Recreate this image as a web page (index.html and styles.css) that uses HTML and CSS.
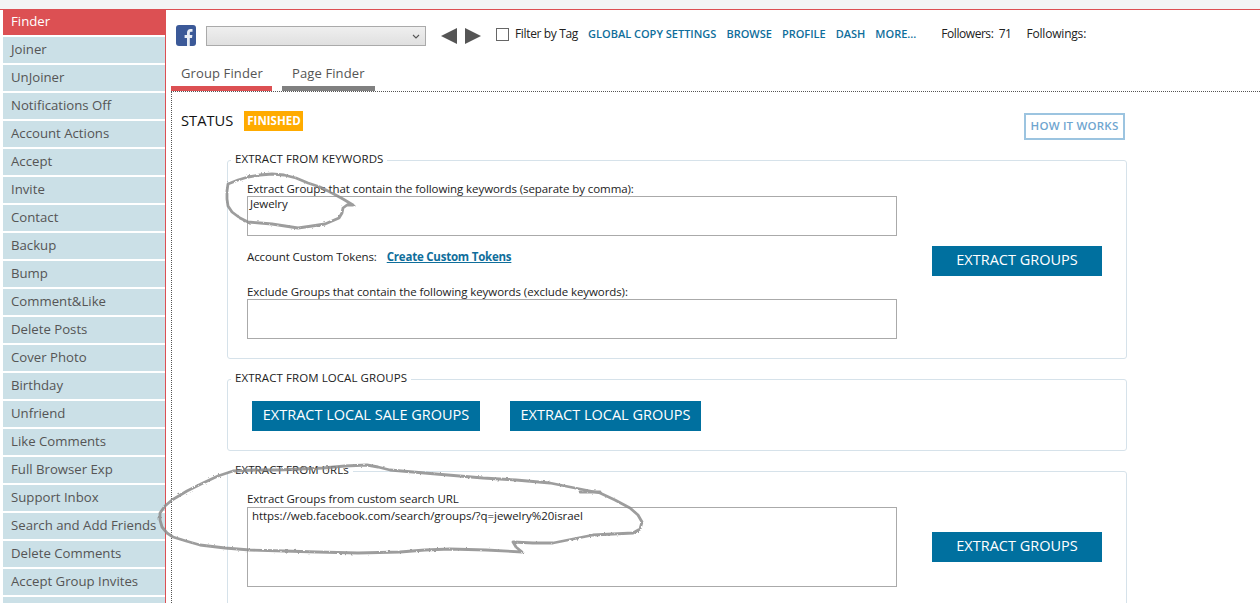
FILE: index.html
```html
<!DOCTYPE html>
<html lang="en">
<head>
<meta charset="utf-8">
<title>Finder</title>
<link rel="stylesheet" href="styles.css">
</head>
<body>
<div class="topstrip"></div>
<div class="app">
  <nav class="sidebar">
    <a class="nav active">Finder</a>
    <a class="nav">Joiner</a>
    <a class="nav">UnJoiner</a>
    <a class="nav">Notifications Off</a>
    <a class="nav">Account Actions</a>
    <a class="nav">Accept</a>
    <a class="nav">Invite</a>
    <a class="nav">Contact</a>
    <a class="nav">Backup</a>
    <a class="nav">Bump</a>
    <a class="nav">Comment&amp;Like</a>
    <a class="nav">Delete Posts</a>
    <a class="nav">Cover Photo</a>
    <a class="nav">Birthday</a>
    <a class="nav">Unfriend</a>
    <a class="nav">Like Comments</a>
    <a class="nav">Full Browser Exp</a>
    <a class="nav">Support Inbox</a>
    <a class="nav">Search and Add Friends</a>
    <a class="nav">Delete Comments</a>
    <a class="nav">Accept Group Invites</a>
    <a class="nav"></a>
  </nav>
  <main class="main">
    <div class="toolbar">
      <svg class="fb" width="20" height="21" viewBox="0 0 20 21"><rect width="20" height="21" rx="3" fill="#3b5998"/><path d="M11 21v-8H8.6V10H11V7.8C11 5.4 12.4 4 14.6 4c.9 0 1.6.1 1.9.1v2.6h-1.3c-1.1 0-1.4.6-1.4 1.3V10h2.6l-.4 3h-2.2v8z" fill="#e9eef6"/></svg>
      <div class="select"><svg width="8" height="5" viewBox="0 0 8 5"><path d="M1 1l3 3 3-3" fill="none" stroke="#555" stroke-width="1.1"/></svg></div>
      <svg class="arrows" width="40" height="18" viewBox="0 0 40 18"><path d="M0 9L16 1v16z" fill="#555"/><path d="M24 1l16 8-16 8z" fill="#555"/></svg>
      <span class="check"></span>
      <span class="filter">Filter by Tag</span>
      <a class="tl first">GLOBAL COPY SETTINGS</a>
      <a class="tl">BROWSE</a>
      <a class="tl">PROFILE</a>
      <a class="tl">DASH</a>
      <a class="tl">MORE...</a>
      <span class="stat followers">Followers:&nbsp; 71</span>
      <span class="stat followings">Followings:</span>
    </div>
    <div class="tabs">
      <a class="tab tab-on">Group Finder</a>
      <a class="tab tab-off">Page Finder</a>
    </div>
    <div class="content">
      <div class="statusrow">
        <span class="status">STATUS</span>
        <span class="badge">FINISHED</span>
        <a class="how">HOW IT WORKS</a>
      </div>
      <fieldset class="panel p1">
        <legend>EXTRACT FROM KEYWORDS</legend>
        <div class="cols">
          <div class="fields">
            <label class="lbl">Extract Groups that contain the following keywords (separate by comma):</label>
            <div class="ta h40">Jewelry</div>
            <div class="tokens"><span>Account Custom Tokens:</span><a class="create">Create Custom Tokens</a></div>
            <label class="lbl">Exclude Groups that contain the following keywords (exclude keywords):</label>
            <div class="ta h40"></div>
          </div>
          <a class="btn side">EXTRACT GROUPS</a>
        </div>
      </fieldset>
      <fieldset class="panel p2">
        <legend>EXTRACT FROM LOCAL GROUPS</legend>
        <div class="btnrow">
          <a class="btn">EXTRACT LOCAL SALE GROUPS</a>
          <a class="btn">EXTRACT LOCAL GROUPS</a>
        </div>
      </fieldset>
      <fieldset class="panel p3">
        <legend>EXTRACT FROM URLs</legend>
        <div class="cols">
          <div class="fields">
            <label class="lbl">Extract Groups from custom search URL</label>
            <div class="ta h80 url">https://web.facebook.com/search/groups/?q=jewelry%20israel</div>
          </div>
          <a class="btn side side3">EXTRACT GROUPS</a>
        </div>
      </fieldset>
    </div>
  </main>
</div>
<svg class="scribble" width="1260" height="603" viewBox="0 0 1260 603">
  <defs>
    <filter id="rough" x="0" y="0" width="100%" height="100%" filterUnits="userSpaceOnUse">
      <feTurbulence type="fractalNoise" baseFrequency="0.35" numOctaves="2" seed="4"/>
      <feDisplacementMap in="SourceGraphic" scale="2.4"/>
    </filter>
  </defs>
  <g class="strokes" filter="url(#rough)">
    <path d="M228 184L238 180L248 177L260 175L272 174L284 175L296 178L308 183L320 187L332 193L343 199L353 205L347 205L343 208L342 213L339 218L332 221L325 224L312 226L298 228L285 226L272 224L260 223L248 222L240 218L232 212L228 206L227 199L227 191Z"/>
    <path d="M233 471L218 476L203 483L187 491L172 500L165 506L160 513L160 520L162 527L167 533L173 537L186 541L200 545L225 548L250 550L284 551L317 552L358 553L400 552L425 550L450 549L486 550L522 552L516 547L513 542L533 543L553 543L573 539L593 535L613 534L633 533L640 529L642 522L638 515L630 508L615 500L600 493L575 488L550 483L516 480L483 478L436 474L390 470L378 467L367 465L345 466L323 468L300 469L278 470L255 470Z"/>
    <path d="M580 492L600 492"/>
  </g>
</svg>
</body>
</html>
```

FILE: styles.css
```css
* { box-sizing: border-box; }
html, body { margin: 0; padding: 0; height: 603px; overflow: hidden; background: #fff; }
body { font-family: "Open Sans", "Noto Sans", sans-serif; font-size: 12px; color: #222; position: relative; }
a { display: block; }

.topstrip { height: 9px; background: #f3f5f5; }
.app { display: flex; border-top: 1px solid #dc5053; height: 594px; padding-left: 3px; }

.sidebar { width: 163px; flex: none; border-right: 1px solid #dc5053; display: flex; flex-direction: column; gap: 2px; overflow: hidden; }
.nav { flex: none; height: 26px; line-height: 25px; background: #cbe0e7; color: #555; padding-left: 8px; font-size: 13.2px; white-space: nowrap; }
.nav.active { background: #dc5053; color: #fff; height: 25px; line-height: 23px; }

.main { flex: 1; min-width: 0; }
.toolbar { height: 54px; padding: 15px 0 0 10px; display: flex; align-items: flex-start; }
.fb { flex: none; }
.select { width: 220px; height: 20px; margin: 1px 0 0 10px; border: 1px solid #aaa; background: linear-gradient(#efefef, #e0e0e0); display: flex; align-items: center; justify-content: flex-end; padding-right: 5px; }
.arrows { margin: 2px 0 0 15px; flex: none; }
.check { width: 13px; height: 13px; margin: 3px 0 0 15px; border: 1px solid #666; flex: none; }
.filter { margin-left: 6px; font-size: 12px; letter-spacing: -.35px; line-height: 17px; }
.tl { margin-left: 10px; color: #0f6e9b; font-weight: 600; font-size: 11px; line-height: 18px; white-space: nowrap; }
.tl.first { margin-left: 10px; }
.stat { font-size: 12px; letter-spacing: -.45px; line-height: 18px; white-space: nowrap; }
.followers { margin-left: 25px; }
.followings { margin-left: 15px; letter-spacing: -.2px; }

.tabs { display: flex; height: 27px; padding-left: 5px; gap: 10px; }
.tab { height: 27px; line-height: 19px; font-size: 13px; color: #555; padding: 0 10px; border-bottom: 5px solid #808080; letter-spacing: .12px; white-space: nowrap; }
.tab-on { width: 101px; border-bottom-color: #dc5053; }
.tab-off { width: 93px; }

.content { margin-left: 5px; border-top: 1px dotted #555; border-left: 1px dotted #555; padding: 0 0 0 55px; height: 512px; }
.statusrow { height: 60px; margin-left: -46px; width: 944px; padding-top: 17px; display: flex; align-items: flex-start; }
.status { font-size: 14.7px; color: #111; line-height: 22px; }
.badge { margin: 2px 0 0 11px; background: #ffab00; color: #fff; font-weight: 700; font-size: 11.5px; height: 20px; line-height: 19px; padding: 0 2px 0 3px; }
.how { margin: 4px 0 0 auto; width: 101px; height: 27px; border: 2px solid #9cc4e0; color: #6fa5cf; font-weight: 600; font-size: 11.5px; line-height: 22px; text-align: center; letter-spacing: .2px; white-space: nowrap; }

.panel { margin: 0 0 12px; width: 900px; border: 1px solid #d6e2ea; border-radius: 3px; padding: 0; min-width: 0; }
.panel legend { margin: 0 0 0 3px; padding: 0 4px 4px 4px; font-size: 11.5px; line-height: 13px; color: #222; letter-spacing: .08px; }
.p1 { height: 207px; }
.p2 { height: 80px; }
.p3 { height: 170px; }

.cols { display: flex; }
.fields { width: 650px; margin-left: 19px; flex: none; }
.lbl { display: block; font-size: 11.5px; line-height: 16px; letter-spacing: -.08px; white-space: nowrap; color: #222; }
.p1 .lbl { line-height: 14px; }
.ta { border: 1px solid #aaa; font-size: 11.5px; letter-spacing: -.1px; color: #222; padding: 0 2px; line-height: 13px; }
.h40 { height: 40px; }
.h80 { height: 80px; }
.url { padding: 0 4px; letter-spacing: -.05px; line-height: 15px; }
.fields .lbl:first-child { margin-top: 11px; }
.p1 .fields .lbl:first-child { margin-top: 13px; }
.tokens { display: flex; height: 18px; margin: 12px 0 19px; line-height: 18px; font-size: 11.5px; letter-spacing: -.11px; }
.create { margin-left: 10px; color: #0f6e9b; font-weight: 700; text-decoration: underline; letter-spacing: -.22px; }
.btn { background: #00709f; color: #fff; height: 30px; line-height: 27px; text-align: center; font-size: 14.5px; white-space: nowrap; }
.side { width: 170px; margin: 77px 0 0 35px; flex: none; }
.side3 { margin-top: 52px; }
.btnrow { display: flex; gap: 30px; padding: 13px 0 0 24px; }
.btnrow .btn:first-child { width: 228px; }
.btnrow .btn:last-child { width: 191px; }

.scribble { position: absolute; left: 0; top: 0; pointer-events: none; }
.strokes { fill: none; stroke: #8c8c8c; stroke-width: 2.8; stroke-linejoin: round; stroke-linecap: round; opacity: .85; }
```
